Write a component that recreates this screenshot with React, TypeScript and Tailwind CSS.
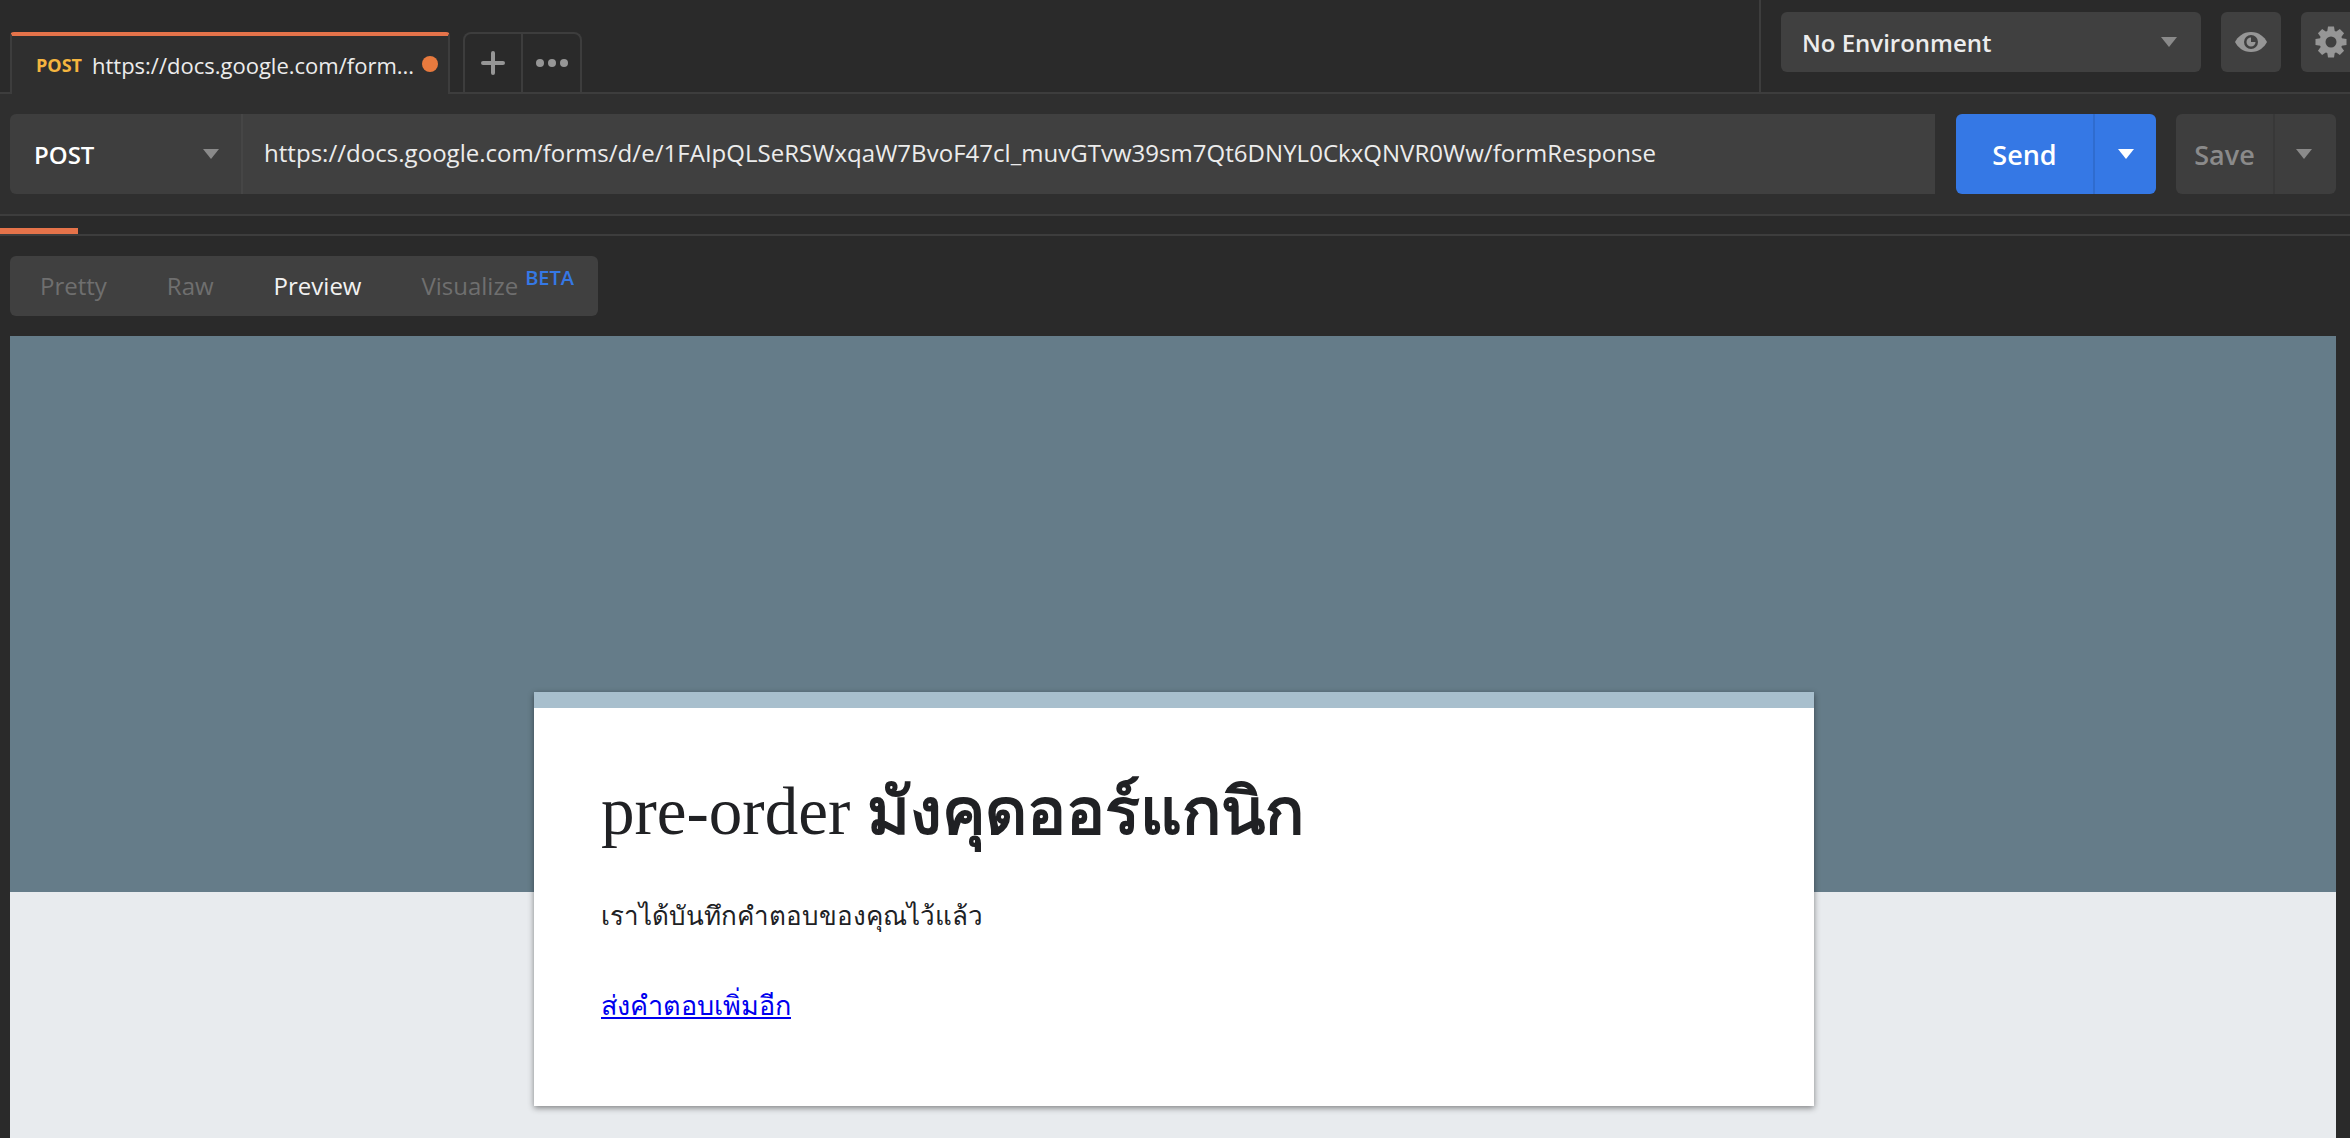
function Caret({ color = '#8a8a8a' }: { color?: string }) {
    return (
        <svg width="16" height="10" viewBox="0 0 16 10" className="shrink-0">
            <path d="M0 0H16L8 10Z" fill={color} />
        </svg>
    );
}

function EyeIcon() {
    return (
        <svg width="32" height="20" viewBox="0 0 32 20">
            <path fill="#969696" d="M16 0C24 0 29.5 5 32 10C29.5 15 24 20 16 20C8 20 2.5 15 0 10C2.5 5 8 0 16 0Z" />
            <circle cx="16" cy="10" r="7" fill="#404040" />
            <path fill="#969696" d="M16 5.5A4.5 4.5 0 1 0 20.5 10H16Z" />
        </svg>
    );
}

function GearIcon() {
    const angles = [0, 45, 90, 135, 180, 225, 270, 315];
    return (
        <svg width="32" height="32" viewBox="0 0 32 32">
            {angles.map((a) => (
                <path key={a} fill="#969696" d="M13 0.5H19L20 7H12Z" transform={`rotate(${a} 16 16)`} />
            ))}
            <circle cx="16" cy="16" r="11.5" fill="#969696" />
            <circle cx="16" cy="16" r="5.5" fill="#404040" />
        </svg>
    );
}

export default function App() {
    return (
        <div className="w-[2350px] h-[1138px] overflow-hidden bg-[#2a2a2a] font-['Open_Sans',sans-serif]">
            {/* Tab bar */}
            <div className="flex h-[94px] border-b-2 border-[#3d3d3d]">
                <div className="flex-1 flex items-end pl-[10px] gap-[13px]">
                    <div className="w-[440px] h-[62px] -mb-[2px] flex items-center pl-[24px] pr-[10px] bg-[#2f2f2f] border-x-2 border-[#3d3d3d] border-t-4 border-t-[#e5734a] rounded-t-[4px]">
                        <span className="text-[18px] font-bold text-[#f5b53f] mr-[10px]">POST</span>
                        <span className="text-[22px] text-[#ececec] whitespace-nowrap">https://docs.google.com/form...</span>
                        <span className="ml-auto -mt-[2px] w-[16px] h-[16px] rounded-full bg-[#e87a3e]" />
                    </div>
                    <div className="h-[60px] flex border-x-2 border-t-2 border-[#3d3d3d] rounded-t-[8px]">
                        <div className="w-[58px] flex items-center justify-center border-r-2 border-[#3d3d3d]">
                            <svg width="24" height="24" viewBox="0 0 24 24">
                                <path d="M12 2V22M2 12H22" stroke="#969696" strokeWidth="4" strokeLinecap="round" />
                            </svg>
                        </div>
                        <div className="w-[57px] flex items-center justify-center gap-[4px]">
                            <span className="w-[8px] h-[8px] rounded-full bg-[#969696]" />
                            <span className="w-[8px] h-[8px] rounded-full bg-[#969696]" />
                            <span className="w-[8px] h-[8px] rounded-full bg-[#969696]" />
                        </div>
                    </div>
                </div>
                <div className="w-[591px] shrink-0 border-l-2 border-[#3d3d3d] flex pl-[20px] pt-[12px] gap-[20px]">
                    <div className="w-[420px] h-[60px] shrink-0 flex items-center justify-between pl-[21px] pr-[24px] bg-[#404040] rounded-[6px]">
                        <span className="pt-[1px] text-[24px] font-semibold text-[#ececec]">No Environment</span>
                        <Caret />
                    </div>
                    <div className="w-[60px] h-[60px] shrink-0 flex items-center justify-center bg-[#404040] rounded-[6px]">
                        <EyeIcon />
                    </div>
                    <div className="w-[60px] h-[60px] shrink-0 flex items-center justify-center bg-[#404040] rounded-[6px]">
                        <GearIcon />
                    </div>
                </div>
            </div>

            {/* Request bar */}
            <div className="h-[122px] pt-[20px] pl-[10px] bg-[#2f2f2f] border-b-2 border-[#3d3d3d] flex">
                <div className="w-[233px] h-[80px] flex items-center justify-between pl-[24px] pr-[22px] bg-[#3e3e3e] border-r-2 border-[#464646] rounded-l-[6px]">
                    <span className="pt-[2px] text-[24px] font-semibold text-white">POST</span>
                    <Caret />
                </div>
                <div className="w-[1692px] h-[80px] flex items-center pl-[21px] bg-[#404040]">
                    <span className="pb-[2px] text-[24px] tracking-[0.03px] text-[#ececec]">https://docs.google.com/forms/d/e/1FAIpQLSeRSWxqaW7BvoF47cl_muvGTvw39sm7Qt6DNYL0CkxQNVR0Ww/formResponse</span>
                </div>
                <div className="ml-[21px] w-[200px] h-[80px] flex bg-[#3578e5] rounded-[6px]">
                    <div className="w-[139px] flex items-center justify-center border-r-2 border-[#2f6ccf]">
                        <span className="pt-[2px] text-[27px] font-semibold text-white">Send</span>
                    </div>
                    <div className="flex-1 flex items-center justify-center">
                        <Caret color="#ffffff" />
                    </div>
                </div>
                <div className="ml-[20px] w-[160px] h-[80px] flex bg-[#3e3e3e] rounded-[6px]">
                    <div className="w-[99px] flex items-center justify-center border-r-2 border-[#383838]">
                        <span className="pt-[2px] text-[27px] font-semibold text-[#8a8a8a]">Save</span>
                    </div>
                    <div className="flex-1 flex items-center justify-center pr-[3px]">
                        <Caret />
                    </div>
                </div>
            </div>

            {/* Progress */}
            <div className="h-[20px] border-b-2 border-[#3d3d3d] flex items-end">
                <div className="w-[78px] h-[6px] bg-[#e5734a]" />
            </div>

            {/* Response */}
            <div className="pl-[10px] pr-[14px] pt-[20px]">
                <div className="w-[588px] h-[60px] flex items-center bg-[#404040] rounded-[6px] text-[24px] text-[#6f6f6f]">
                    <span className="ml-[30px]">Pretty</span>
                    <span className="ml-[60px]">Raw</span>
                    <span className="ml-[60px] text-[#f2f2f2]">Preview</span>
                    <span className="ml-[60px]">Visualize</span>
                    <span className="ml-[7px] -mt-[16px] text-[20px] font-semibold text-[#3578e5]">BETA</span>
                </div>

                <div className="mt-[20px] h-[802px] bg-[#e8ebee]">
                    <div className="h-[556px] bg-[#657c89]" />
                    <div className="relative -mt-[200px] ml-[524px] w-[1280px] h-[414px] bg-white border-t-[16px] border-[#a8bfcd] shadow-[0_2px_6px_rgba(0,0,0,0.45)] pl-[67px] pt-[59px]">
                        <h1 className="text-[67px] leading-[84px] text-[#202124] font-['Liberation_Serif',serif] whitespace-nowrap">
                            pre-order <span className="text-[65px] font-semibold font-['Noto_Sans','Liberation_Sans',sans-serif]">มังคุดออร์แกนิก</span>
                        </h1>
                        <p className="mt-[42px] text-[26px] leading-[40px] text-[#202124] font-['Noto_Sans','Liberation_Sans',sans-serif]">เราได้บันทึกคำตอบของคุณไว้แล้ว</p>
                        <a className="block mt-[50px] w-fit text-[27px] leading-[40px] text-[#0000ee] underline font-['Noto_Sans','Liberation_Sans',sans-serif]">ส่งคำตอบเพิ่มอีก</a>
                    </div>
                </div>
            </div>
        </div>
    );
}
